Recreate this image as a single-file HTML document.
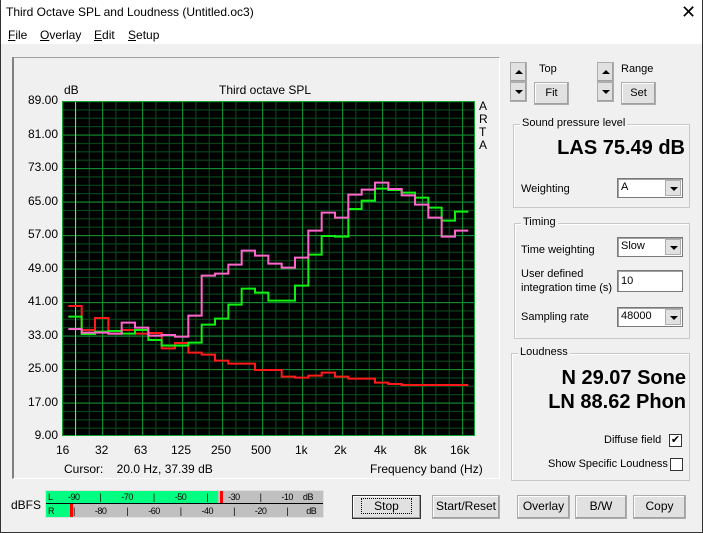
<!DOCTYPE html>
<html><head><meta charset="utf-8"><style>
*{margin:0;padding:0;box-sizing:border-box}
body{width:703px;height:533px;background:#f0f0f0;font-family:"Liberation Sans",sans-serif;font-size:11px;color:#000;position:relative;overflow:hidden}
.a{position:absolute;white-space:nowrap}
.btn{position:absolute;background:#e1e1e1;border:1px solid #adadad;box-shadow:inset -1px -1px #a0a0a0, inset 1px 1px #fff;text-align:center;font-size:12px;line-height:21px}
.grp{position:absolute;border:1px solid #c8c8c8;box-shadow:inset 1px 1px #fff}
.gl{position:absolute;background:#f0f0f0;padding:0 2px;font-size:11px;top:-8px;left:6px}
.combo{position:absolute;background:#fff;border:1px solid #7a7a7a;box-shadow:inset 1px 1px #a0a0a0;font-size:11px;padding-left:3px;line-height:17px}
.combo i{position:absolute;right:1px;top:1px;width:16px;bottom:1px;background:#e1e1e1;border:1px solid #adadad}
.combo i:after{content:"";position:absolute;left:4px;top:6px;border-left:4px solid transparent;border-right:4px solid transparent;border-top:4px solid #000}
.spin{position:absolute;width:17px;height:20px;background:#e1e1e1;border:1px solid #adadad;box-shadow:inset -1px -1px #a0a0a0}
.up:after,.dn:after{content:"";position:absolute;left:4px;top:7px;border-left:4px solid transparent;border-right:4px solid transparent}
.up:after{border-bottom:4px solid #000}.dn:after{border-top:4px solid #000}
.cb{position:absolute;width:13px;height:13px;background:#fff;border:1px solid #333}
</style></head><body>
<div class="a" style="left:0;top:0;width:703px;height:44px;background:#fff"></div>
<div class="a" style="left:0;top:0;width:703px;height:533px;border:1px solid #333;border-top:none"></div>
<div class="a" style="left:6px;top:5px;font-size:12px">Third Octave SPL and Loudness (Untitled.oc3)</div>
<div class="a" style="left:681px;top:2px;font-size:18px;font-weight:300">✕</div>
<div class="a" style="left:8px;top:28px;font-size:12px"><u>F</u>ile</div>
<div class="a" style="left:40px;top:28px;font-size:12px"><u>O</u>verlay</div>
<div class="a" style="left:94px;top:28px;font-size:12px"><u>E</u>dit</div>
<div class="a" style="left:128px;top:28px;font-size:12px"><u>S</u>etup</div>

<div class="a" style="left:12px;top:57px;width:488px;height:422px;border-top:1px solid #a0a0a0;border-left:2px solid #808080;border-right:1px solid #fff;border-bottom:1px solid #fff"></div>
<div class="a" style="left:64px;top:83px;font-size:12px">dB</div>
<div class="a" style="left:219px;top:83px;font-size:12px">Third octave SPL</div>
<div class="a" style="left:479px;top:100px;font-size:12px;line-height:13px;width:8px">A<br>R<br>T<br>A</div>
<div class="a" style="left:18px;top:84px;font-size:12px;text-align:right;width:40px;line-height:33.5px">89.00<br>81.00<br>73.00<br>65.00<br>57.00<br>49.00<br>41.00<br>33.00<br>25.00<br>17.00<br>9.00</div>
<div class="a" style="left:56px;top:443px;font-size:12px">16</div>
<div class="a" style="left:95px;top:443px;font-size:12px">32</div>
<div class="a" style="left:134px;top:443px;font-size:12px">63</div>
<div class="a" style="left:171px;top:443px;font-size:12px">125</div>
<div class="a" style="left:211px;top:443px;font-size:12px">250</div>
<div class="a" style="left:251px;top:443px;font-size:12px">500</div>
<div class="a" style="left:295px;top:443px;font-size:12px">1k</div>
<div class="a" style="left:334px;top:443px;font-size:12px">2k</div>
<div class="a" style="left:374px;top:443px;font-size:12px">4k</div>
<div class="a" style="left:414px;top:443px;font-size:12px">8k</div>
<div class="a" style="left:450px;top:443px;font-size:12px">16k</div>
<div class="a" style="left:64px;top:462px;font-size:12px">Cursor:&nbsp;&nbsp;&nbsp; 20.0 Hz, 37.39 dB</div>
<div class="a" style="left:370px;top:462px;font-size:12px">Frequency band (Hz)</div>

<svg class="a" style="left:0;top:0" width="703" height="533">
<defs>
<pattern id="mi" x="62" y="101" width="13.333" height="8.375" patternUnits="userSpaceOnUse"><path d="M0.5 0V8.375M0 0.5H13.333" stroke="#06491a" stroke-width="1.2"/></pattern>
<pattern id="ma" x="62" y="101" width="40" height="33.5" patternUnits="userSpaceOnUse"><path d="M0.5 0V33.5M0 0.5H40" stroke="#138a2e" stroke-width="1.3"/></pattern>
</defs>
<rect x="62" y="101" width="413" height="335" fill="#000"/>
<rect x="62" y="101" width="413" height="335" fill="url(#mi)"/>
<rect x="62" y="101" width="413" height="335" fill="url(#ma)"/>
<rect x="62.5" y="101.5" width="412" height="334" fill="none" stroke="#13a030"/>
<line x1="75.5" y1="102" x2="75.5" y2="436" stroke="#c8c820"/>
<g transform="translate(60,160) scale(0.33333)" fill="none" stroke-width="6">
<polyline stroke="#ff1a1a" points="25,438 65,438 65,510 105,510 105,474 145,474 145,521 185,521 185,510 225,510 225,521 265,521 265,519 305,519 305,565 345,565 345,549 385,549 385,578 425,578 425,584 465,584 465,602 505,602 505,611 585,611 585,630 665,630 665,650 705,650 705,653 745,653 745,647 785,647 785,638 825,638 825,650 865,650 865,656 945,656 945,668 985,668 985,672 1025,672 1025,675 1225,675"/>
<polyline stroke="#10f010" points="25,470 65,470 65,522 105,522 105,515 145,515 145,513 185,513 185,521 225,521 225,510 265,510 265,540 305,540 305,557 385,557 385,548 425,548 425,494 465,494 465,476 505,476 505,434 545,434 545,386 585,386 585,398 625,398 625,422 705,422 705,377 745,377 745,284 785,284 785,228 825,228 825,230 865,230 865,147 905,147 905,122 945,122 945,86 985,86 985,90 1025,90 1025,98 1065,98 1065,113 1105,113 1105,143 1145,143 1145,182 1185,182 1185,155 1225,155"/>
<polyline stroke="#ff66cc" points="25,507 65,507 65,518 145,518 145,521 185,521 185,488 225,488 225,503 265,503 265,527 305,527 305,525 345,525 345,530 385,530 385,467 425,467 425,347 465,347 465,341 505,341 505,314 545,314 545,272 585,272 585,287 625,287 625,311 665,311 665,323 705,323 705,293 745,293 745,212 785,212 785,158 825,158 825,173 865,173 865,104 905,104 905,89 945,89 945,68 985,68 985,87 1025,87 1025,106 1065,106 1065,134 1105,134 1105,173 1145,173 1145,230 1185,230 1185,212 1225,212"/>
</g>
</svg>

<div class="a" style="left:11px;top:498px;font-size:12px">dBFS</div>
<div class="a" style="left:45px;top:490px;width:279px;height:28px;background:#c0c0c0;border:1px solid #e0e0e0"></div>
<div class="a" style="left:46px;top:491px;width:172px;height:12px;background:#00ff80"></div>
<div class="a" style="left:220px;top:491px;width:3px;height:12px;background:#f00"></div>
<div class="a" style="left:46px;top:504px;width:24px;height:13px;background:#00ff80"></div>
<div class="a" style="left:70px;top:504px;width:3px;height:13px;background:#f00"></div>
<div class="a" style="left:46px;top:503px;width:277px;height:1px;background:#000"></div>
<div class="a" style="left:48px;top:491px;font-size:9px;line-height:12px">L</div>
<div class="a" style="left:48px;top:505px;font-size:9px;line-height:12px">R</div>
<div class="a" style="left:68px;top:491px;font-size:9px;line-height:12px;letter-spacing:-0.5px;white-space:pre">-90          |          -70          |          -50          |          -30          |          -10     dB</div>
<div class="a" style="left:73px;top:505px;font-size:9px;line-height:12px;letter-spacing:-0.5px;white-space:pre">|          -80          |          -60          |          -40          |          -20          |         dB</div>

<div class="spin up" style="left:510px;top:62px"></div>
<div class="spin dn" style="left:510px;top:82px"></div>
<div class="a" style="left:539px;top:63px">Top</div>
<div class="btn" style="left:534px;top:82px;width:35px;height:23px;font-size:11px">Fit</div>
<div class="spin up" style="left:597px;top:62px"></div>
<div class="spin dn" style="left:597px;top:82px"></div>
<div class="a" style="left:621px;top:63px">Range</div>
<div class="btn" style="left:621px;top:82px;width:35px;height:23px;font-size:11px">Set</div>

<div class="grp" style="left:513px;top:124px;width:177px;height:84px"><div class="gl">Sound pressure level</div></div>
<div class="a" style="left:540px;top:137px;width:145px;text-align:right;font-size:20px;font-weight:bold">LAS 75.49 dB</div>
<div class="a" style="left:521px;top:183px">Weighting</div>
<div class="combo" style="left:617px;top:178px;width:66px;height:20px">A<i></i></div>

<div class="grp" style="left:514px;top:223px;width:176px;height:116px"><div class="gl">Timing</div></div>
<div class="a" style="left:521px;top:244px">Time weighting</div>
<div class="combo" style="left:617px;top:237px;width:66px;height:20px">Slow<i></i></div>
<div class="a" style="left:521px;top:267px;line-height:14px">User defined<br>integration time (s)</div>
<div class="combo" style="left:617px;top:270px;width:66px;height:22px;line-height:20px">10</div>
<div class="a" style="left:521px;top:311px">Sampling rate</div>
<div class="combo" style="left:617px;top:307px;width:66px;height:20px">48000<i></i></div>

<div class="grp" style="left:511px;top:353px;width:179px;height:128px"><div class="gl">Loudness</div></div>
<div class="a" style="left:520px;top:366px;width:166px;text-align:right;font-size:20px;font-weight:bold;line-height:24px">N 29.07 Sone<br>LN 88.62 Phon</div>
<div class="a" style="left:604px;top:434px">Diffuse field</div>
<div class="cb" style="left:669px;top:434px;font-size:11px;line-height:11px;text-align:center">✔</div>
<div class="a" style="left:548px;top:458px">Show Specific Loudness</div>
<div class="cb" style="left:670px;top:458px"></div>

<div class="btn" style="left:352px;top:495px;width:69px;height:24px;border:1px solid #333"><span style="outline:1px dotted #000;padding:0 12px">Stop</span></div>
<div class="btn" style="left:432px;top:495px;width:68px;height:24px">Start/Reset</div>
<div class="btn" style="left:517px;top:495px;width:53px;height:24px">Overlay</div>
<div class="btn" style="left:575px;top:495px;width:52px;height:24px">B/W</div>
<div class="btn" style="left:633px;top:495px;width:53px;height:24px">Copy</div>
</body></html>
